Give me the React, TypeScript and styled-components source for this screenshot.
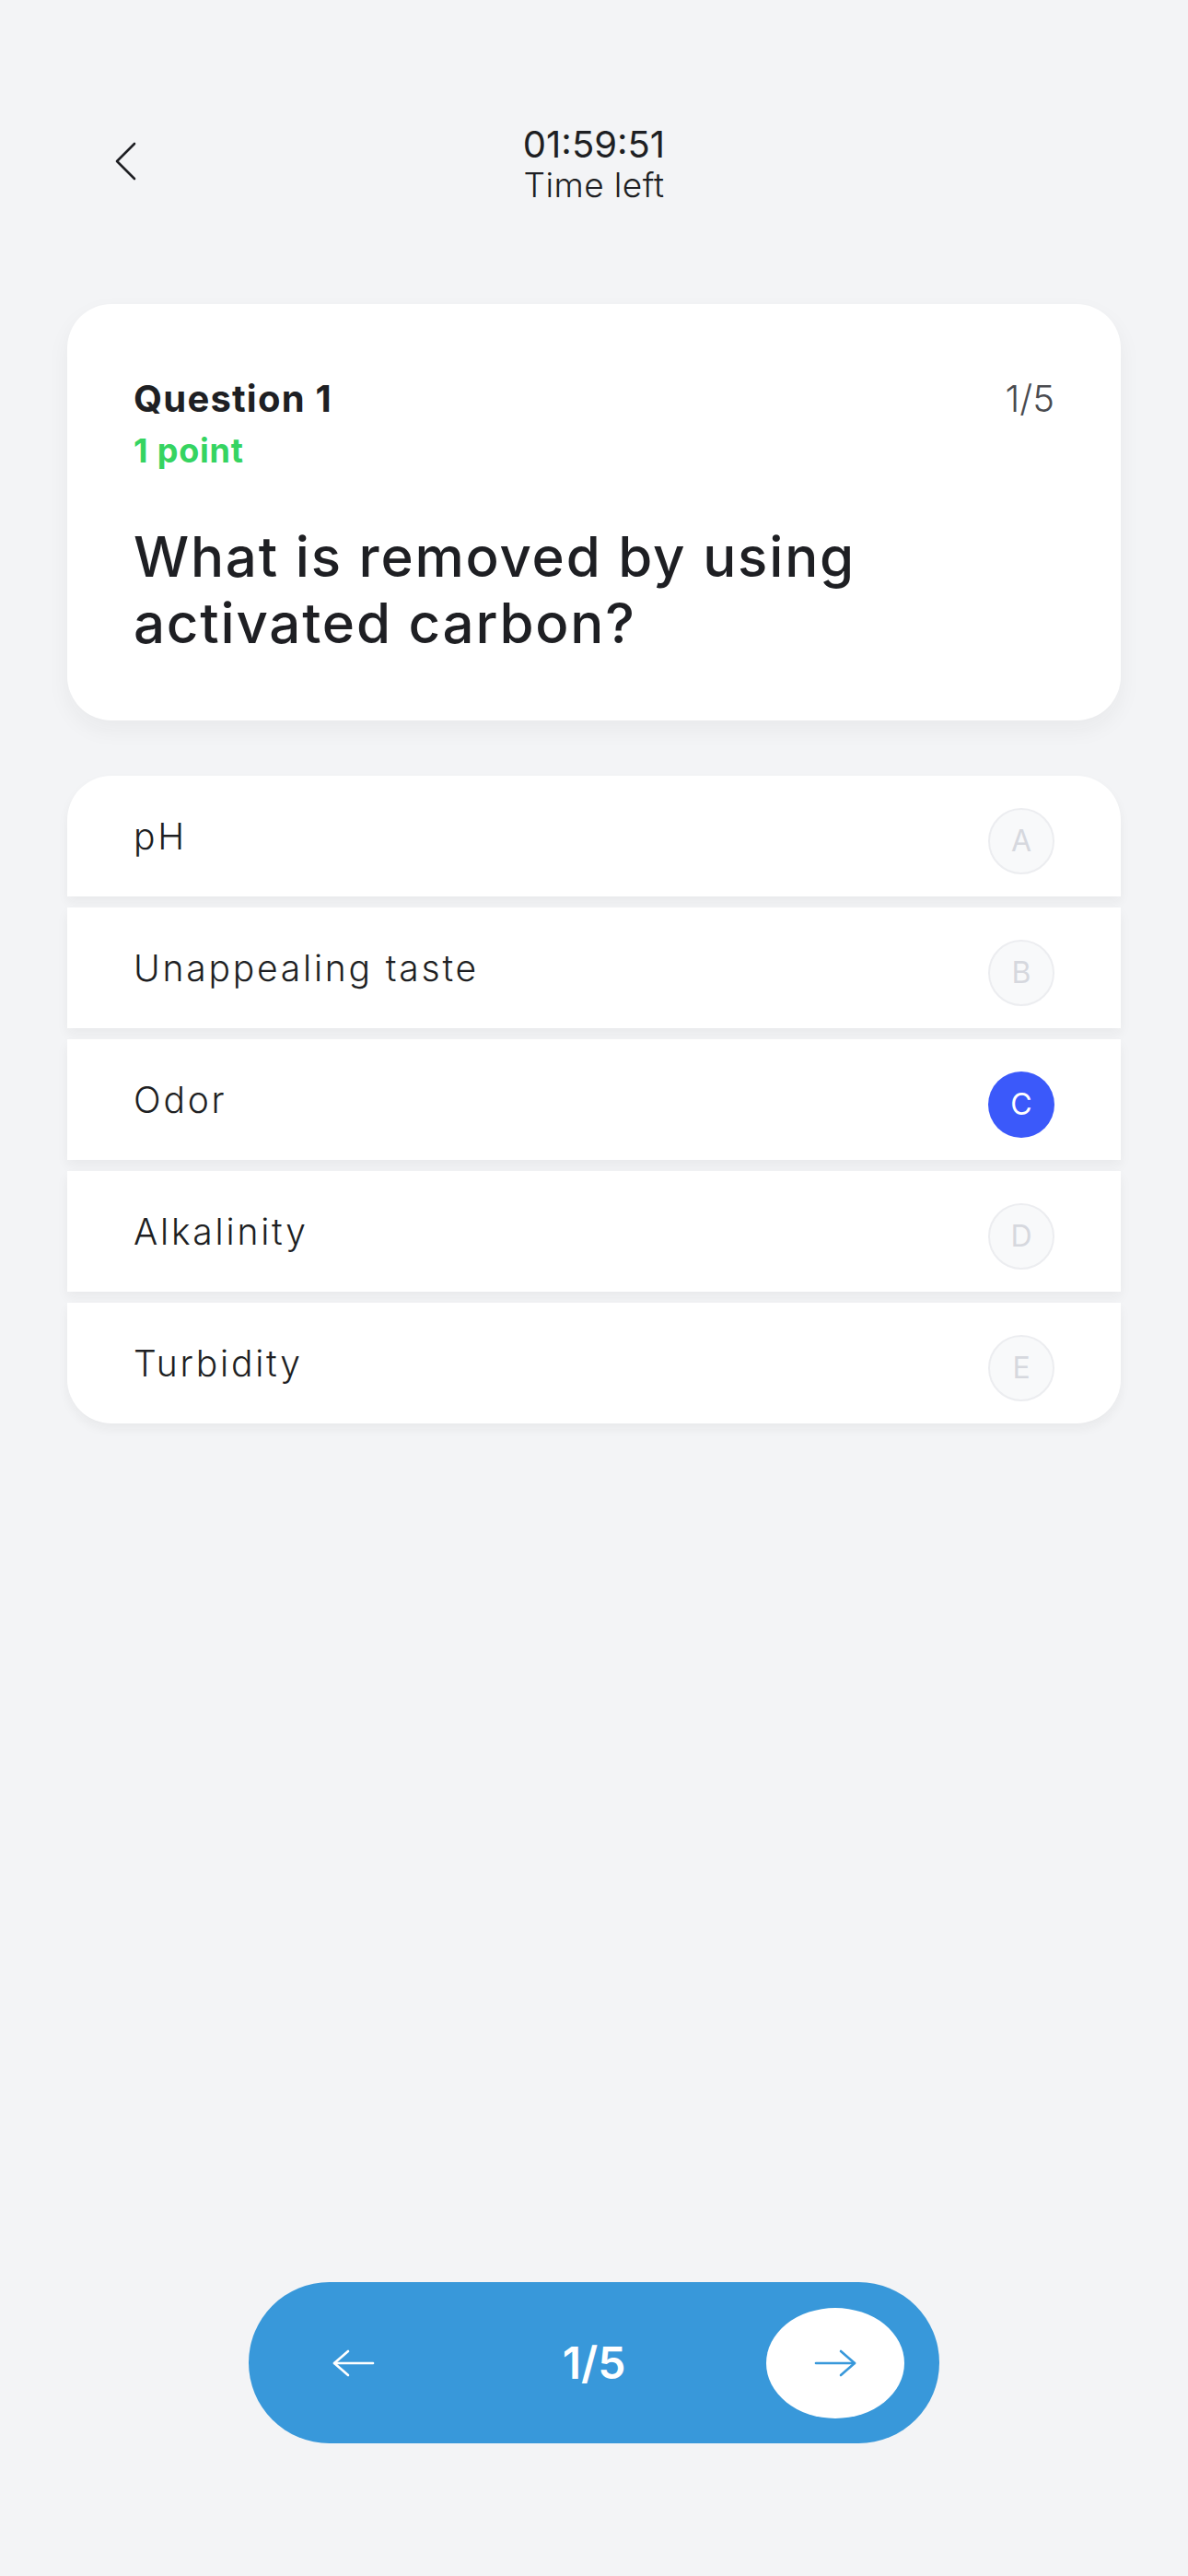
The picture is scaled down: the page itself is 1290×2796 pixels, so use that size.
import React from "react";
import styled, { createGlobalStyle } from "styled-components";

const GlobalStyle = createGlobalStyle`
  html, body {
    margin: 0;
    padding: 0;
    background: #f3f4f6;
  }
  body {
    font-family: "Inter", "Noto Sans", sans-serif;
    color: #1e1f23;
  }
  * { box-sizing: border-box; }
`;

const Page = styled.div`
  width: 1290px;
  min-height: 2796px;
  display: flex;
  flex-direction: column;
  background: #f3f4f6;
`;

const Header = styled.header`
  display: grid;
  grid-template-columns: 1fr auto 1fr;
  align-items: center;
  padding: 134px 124px 0 124px;
`;

const BackButton = styled.button`
  justify-self: start;
  display: flex;
  align-items: center;
  justify-content: center;
  width: 24px;
  height: 40px;
  margin-top: -6px;
  padding: 0;
  border: none;
  background: transparent;
  cursor: pointer;
`;

const TimerBlock = styled.div`
  display: flex;
  flex-direction: column;
  align-items: center;
`;

const TimerValue = styled.div`
  font-size: 40px;
  line-height: 46px;
  font-weight: 400;
  color: #1e1f23;
`;

const TimerLabel = styled.div`
  font-size: 37px;
  line-height: 42px;
  font-weight: 300;
  letter-spacing: 0.4px;
  color: #1e1f23;
`;

const Content = styled.main`
  display: flex;
  flex-direction: column;
  padding: 0 73px;
  margin-top: 108px;
  gap: 60px;
`;

const QuestionCard = styled.section`
  background: #ffffff;
  border-radius: 48px;
  padding: 78px 72px 70px 72px;
  box-shadow: 0 10px 24px rgba(30, 32, 40, 0.05);
  display: flex;
  flex-direction: column;
`;

const CardTop = styled.div`
  display: flex;
  justify-content: space-between;
  align-items: flex-start;
`;

const QuestionMeta = styled.div`
  display: flex;
  flex-direction: column;
  gap: 8px;
`;

const QuestionTitle = styled.div`
  font-size: 40px;
  line-height: 50px;
  font-weight: 700;
  letter-spacing: 1.2px;
  color: #1e1f23;
`;

const Points = styled.div`
  font-size: 36px;
  line-height: 46px;
  font-weight: 700;
  letter-spacing: 0.8px;
  color: #35d461;
`;

const Counter = styled.div`
  font-size: 40px;
  line-height: 50px;
  font-weight: 300;
  color: #4a4b50;
`;

const QuestionText = styled.h1`
  margin: 56px 0 0 0;
  font-size: 60px;
  line-height: 72px;
  font-weight: 500;
  letter-spacing: 1.8px;
  color: #1e1f23;
  max-width: 860px;
`;

const OptionList = styled.ul`
  list-style: none;
  margin: 0;
  padding: 0;
  display: flex;
  flex-direction: column;
  gap: 12px;
`;

const OptionRow = styled.li`
  height: 131px;
  background: #ffffff;
  display: flex;
  align-items: center;
  justify-content: space-between;
  padding: 0 72px;
  box-shadow: 0 6px 12px rgba(30, 32, 40, 0.05);

  &:first-child {
    border-radius: 48px 48px 0 0;
  }
  &:last-child {
    border-radius: 0 0 48px 48px;
  }
`;

const OptionLabel = styled.span`
  font-size: 39px;
  line-height: 48px;
  font-weight: 300;
  letter-spacing: 2.8px;
  color: #1e1f23;
`;

const LetterBadge = styled.span<{ $selected?: boolean }>`
  width: 72px;
  height: 72px;
  margin-top: 10px;
  border-radius: 50%;
  display: flex;
  align-items: center;
  justify-content: center;
  font-size: 32px;
  font-weight: 400;
  background: ${(p) => (p.$selected ? "#3b59fa" : "#f8f9fa")};
  border: ${(p) => (p.$selected ? "none" : "2px solid #ecedf0")};
  color: ${(p) => (p.$selected ? "#ffffff" : "#d6d8de")};
`;

const Spacer = styled.div`
  flex: 1;
`;

const Footer = styled.footer`
  display: flex;
  justify-content: center;
  padding-bottom: 144px;
`;

const Pager = styled.nav`
  width: 750px;
  height: 175px;
  border-radius: 88px;
  background: #3898da;
  display: grid;
  grid-template-columns: 1fr auto 1fr;
  align-items: center;
`;

const PrevButton = styled.button`
  justify-self: start;
  margin-left: 90px;
  width: 48px;
  height: 40px;
  padding: 0;
  border: none;
  background: transparent;
  display: flex;
  align-items: center;
  justify-content: center;
  cursor: pointer;
`;

const PageCount = styled.div`
  font-size: 48px;
  font-weight: 600;
  color: #ffffff;
`;

const NextButton = styled.button`
  justify-self: end;
  margin-right: 38px;
  width: 150px;
  height: 120px;
  border-radius: 50%;
  border: none;
  background: #ffffff;
  display: flex;
  align-items: center;
  justify-content: center;
  cursor: pointer;
`;

const Arrow = ({ dir, color }: { dir: "left" | "right"; color: string }) => (
  <svg
    width="48"
    height="30"
    viewBox="0 0 48 30"
    fill="none"
    stroke={color}
    strokeWidth="2.6"
    strokeLinecap="round"
    strokeLinejoin="round"
    style={dir === "right" ? { transform: "scaleX(-1)" } : undefined}
  >
    <path d="M3 15H45" />
    <path d="M18 2L3 15L18 28" />
  </svg>
);

const options = [
  { letter: "A", text: "pH" },
  { letter: "B", text: "Unappealing taste" },
  { letter: "C", text: "Odor" },
  { letter: "D", text: "Alkalinity" },
  { letter: "E", text: "Turbidity" },
];

export default function App() {
  const selected = "C";
  return (
    <>
      <GlobalStyle />
      <Page>
        <Header>
          <BackButton aria-label="Back">
            <svg width="24" height="42" viewBox="0 0 24 42" fill="none">
              <path
                d="M22 2L3 21L22 40"
                stroke="#1e1f23"
                strokeWidth="2.6"
                strokeLinecap="round"
                strokeLinejoin="round"
              />
            </svg>
          </BackButton>
          <TimerBlock>
            <TimerValue>01:59:51</TimerValue>
            <TimerLabel>Time left</TimerLabel>
          </TimerBlock>
          <div />
        </Header>

        <Content>
          <QuestionCard>
            <CardTop>
              <QuestionMeta>
                <QuestionTitle>Question 1</QuestionTitle>
                <Points>1 point</Points>
              </QuestionMeta>
              <Counter>1/5</Counter>
            </CardTop>
            <QuestionText>What is removed by using activated carbon?</QuestionText>
          </QuestionCard>

          <OptionList>
            {options.map((o) => (
              <OptionRow key={o.letter}>
                <OptionLabel>{o.text}</OptionLabel>
                <LetterBadge $selected={o.letter === selected}>{o.letter}</LetterBadge>
              </OptionRow>
            ))}
          </OptionList>
        </Content>

        <Spacer />

        <Footer>
          <Pager>
            <PrevButton aria-label="Previous">
              <Arrow dir="left" color="#ffffff" />
            </PrevButton>
            <PageCount>1/5</PageCount>
            <NextButton aria-label="Next">
              <Arrow dir="right" color="#3898da" />
            </NextButton>
          </Pager>
        </Footer>
      </Page>
    </>
  );
}
